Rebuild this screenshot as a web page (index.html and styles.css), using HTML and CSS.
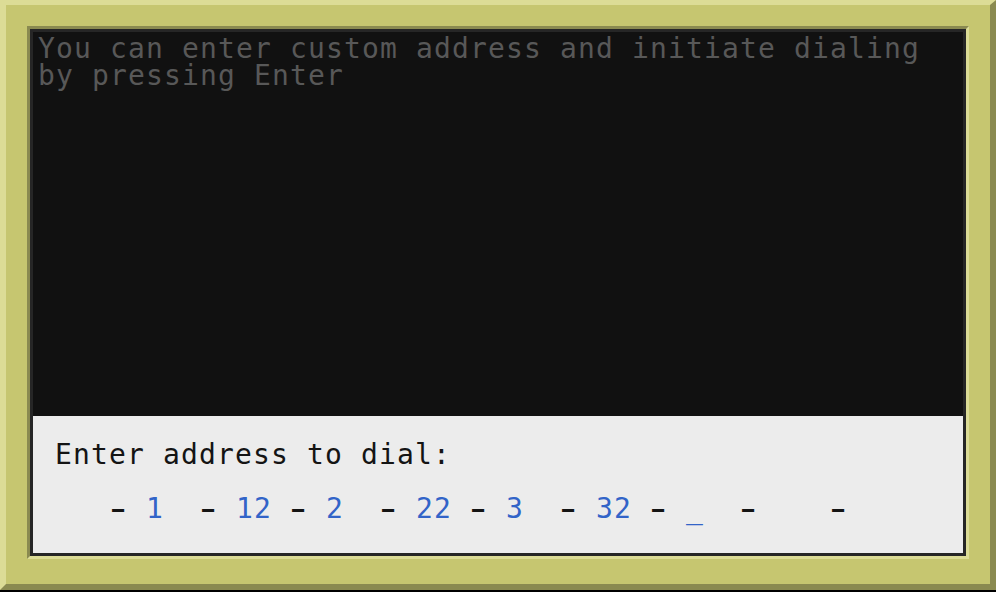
FILE: index.html
```html
<!DOCTYPE html>
<html lang="en">
<head>
<meta charset="utf-8">
<title>Dial</title>
<link rel="stylesheet" href="styles.css">
</head>
<body>
<div class="frame">
  <div class="bevel">
    <div class="screen">
      <div class="log">
        <div class="log-line">You can enter custom address and initiate dialing</div>
        <div class="log-line">by pressing Enter</div>
      </div>
      <div class="panel">
        <div class="prompt">Enter address to dial:</div>
        <div class="dial"><span class="dash">-</span> <span class="num">1</span>  <span class="dash">-</span> <span class="num">12</span> <span class="dash">-</span> <span class="num">2</span>  <span class="dash">-</span> <span class="num">22</span> <span class="dash">-</span> <span class="num">3</span>  <span class="dash">-</span> <span class="num">32</span> <span class="dash">-</span> <span class="num">_</span>  <span class="dash">-</span>    <span class="dash">-</span></div>
      </div>
    </div>
  </div>
</div>
</body>
</html>
```

FILE: styles.css
```css
html, body {
  margin: 0;
  padding: 0;
}
body {
  background: #000;
  width: 996px;
  height: 592px;
  overflow: hidden;
  font-family: "DejaVu Sans Mono", "Liberation Mono", monospace;
}
.frame {
  box-sizing: border-box;
  width: 996px;
  height: 590px;
  background: #c6c670;
  border-left: 6px solid #dcdc96;
  border-top: 5px solid #dcdc96;
  border-right: 6px solid #8a8a50;
  border-bottom: 6px solid #8a8a50;
  padding: 21px 21px 25px 21px;
  display: flex;
}
.bevel {
  flex: 1;
  display: flex;
  border-left: 3px solid #8a8a50;
  border-top: 3px solid #8a8a50;
  border-right: 3px solid #dcdc96;
  border-bottom: 3px solid #dcdc96;
}
.screen {
  flex: 1;
  display: flex;
  flex-direction: column;
  border: 3px solid #262626;
  background: #111111;
}
.log {
  flex: 1;
  padding: 3px 0 0 5px;
  color: #585858;
  font-size: 28px;
  line-height: 27px;
  letter-spacing: 1.14px;
}
.log-line,
.prompt,
.dial {
  white-space: pre;
}
.panel {
  height: 137px;
  background: #ececec;
  color: #141414;
  font-size: 28px;
  line-height: 27px;
  letter-spacing: 1.14px;
  padding: 25px 0 0 22px;
  box-sizing: border-box;
}
.dial {
  margin-top: 27px;
  padding-left: 55px;
}
.dash {
  display: inline-block;
  transform: scale(1.7, 1.3);
}
.num {
  color: #3264c8;
}
```
